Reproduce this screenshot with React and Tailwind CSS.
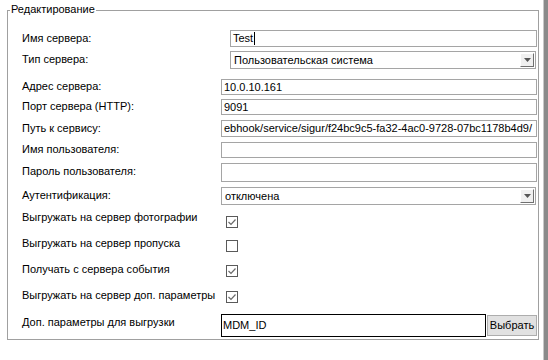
const FONT = { fontFamily: '"Liberation Sans", Arial, sans-serif' };

function Label({ children, w, pt }) {
  return (
    <div className={`shrink-0 pl-[14px] text-[11px] leading-[13px] text-black whitespace-nowrap ${w} ${pt}`}>
      {children}
    </div>
  );
}

function TextBox({ value, w, h, caret, mono }) {
  return (
    <div
      className={`shrink-0 flex items-center overflow-hidden border border-[#a5a5a5] bg-white pl-[2px] text-[11px] leading-[13px] text-black whitespace-nowrap ${w} ${h}`}
    >
      <span>{value}</span>
      {caret && <span className="ml-[1px] inline-block h-[13px] w-[1px] bg-black" />}
    </div>
  );
}

function Combo({ value, w }) {
  return (
    <div className={`shrink-0 flex h-[18px] items-stretch border border-[#a5a5a5] bg-white ${w}`}>
      <div className="flex flex-1 items-center overflow-hidden pl-[3px] text-[11px] leading-[13px] whitespace-nowrap">
        {value}
      </div>
      <div className="my-[1px] mr-[1px] flex w-[14px] items-center justify-center border-t border-l border-white border-r border-b border-r-[#707070] border-b-[#707070] bg-[#f0f0f0]">
        <svg width="7" height="4" viewBox="0 0 7 4">
          <path d="M0 0h7L3.5 4z" fill="#555" />
        </svg>
      </div>
    </div>
  );
}

function Check({ checked, mt }) {
  return (
    <div className={`shrink-0 ml-[0px] flex h-[12px] w-[12px] items-center justify-center border border-[#5a5a5a] bg-white ${mt}`}>
      {checked && (
        <svg width="10" height="10" viewBox="0 0 10 10">
          <path d="M1.5 5l2.5 2.5 4.5-5" fill="none" stroke="#6a6a6a" strokeWidth="1.2" />
        </svg>
      )}
    </div>
  );
}

export default function App() {
  return (
    <div className="flex h-[360px] w-[548px] bg-white text-black" style={FONT}>
      <div className="flex-1">
        <div className="relative ml-[7px] mt-[10px] h-[330px] w-[532px] border border-[#a0a0a0]">
          <div className="absolute left-[2px] top-[-8px] bg-white px-[1px] text-[11px] leading-[13px]">
            Редактирование
          </div>

          <div className="flex flex-col">
            <div className="mt-[19px] flex h-[17px] items-start">
              <Label w="w-[222px]" pt="pt-[2px]">Имя сервера:</Label>
              <TextBox value="Test" w="w-[307px]" h="h-[17px]" caret />
            </div>
            <div className="mt-[4px] flex h-[18px] items-start">
              <Label w="w-[222px]" pt="pt-[2px]">Тип сервера:</Label>
              <Combo value="Пользовательская система" w="w-[306px]" />
            </div>
            <div className="mt-[10px] flex h-[16px] items-start">
              <Label w="w-[213px]" pt="pt-[1px]">Адрес сервера:</Label>
              <TextBox value="10.0.10.161" w="w-[316px]" h="h-[16px]" />
            </div>
            <div className="mt-[4px] flex h-[16px] items-start">
              <Label w="w-[213px]" pt="pt-[1px]">Порт сервера (HTTP):</Label>
              <TextBox value="9091" w="w-[316px]" h="h-[16px]" />
            </div>
            <div className="mt-[5px] flex h-[17px] items-start">
              <Label w="w-[213px]" pt="pt-[2px]">Путь к сервису:</Label>
              <TextBox value="ebhook/service/sigur/f24bc9c5-fa32-4ac0-9728-07bc1178b4d9/" w="w-[316px]" h="h-[17px]" />
            </div>
            <div className="mt-[5px] flex h-[16px] items-start">
              <Label w="w-[213px]" pt="pt-[1px]">Имя пользователя:</Label>
              <TextBox value="" w="w-[316px]" h="h-[16px]" />
            </div>
            <div className="mt-[5px] flex h-[19px] items-start">
              <Label w="w-[213px]" pt="pt-[2px]">Пароль пользователя:</Label>
              <TextBox value="" w="w-[316px]" h="h-[19px]" />
            </div>
            <div className="mt-[5px] flex h-[18px] items-start">
              <Label w="w-[213px]" pt="pt-[2px]">Аутентификация:</Label>
              <Combo value="отключена" w="w-[315px]" />
            </div>
            <div className="mt-[6px] flex h-[17px] items-start">
              <Label w="w-[218px]" pt="pt-0">Выгружать на сервер фотографии</Label>
              <Check checked mt="mt-[5px]" />
            </div>
            <div className="mt-[9px] flex h-[17px] items-start">
              <Label w="w-[218px]" pt="pt-0">Выгружать на сервер пропуска</Label>
              <Check mt="mt-[3px]" />
            </div>
            <div className="mt-[9px] flex h-[17px] items-start">
              <Label w="w-[218px]" pt="pt-0">Получать с сервера события</Label>
              <Check checked mt="mt-[2px]" />
            </div>
            <div className="mt-[9px] flex h-[17px] items-start">
              <Label w="w-[218px]" pt="pt-0">Выгружать на сервер доп. параметры</Label>
              <Check checked mt="mt-[2px]" />
            </div>
            <div className="mt-[8px] flex h-[23px] items-start">
              <Label w="w-[213px]" pt="pt-[2px]">Доп. параметры для выгрузки</Label>
              <div className="flex h-[23px] w-[265px] shrink-0 items-center border border-black bg-white pl-[1px] text-[11px] leading-[13px]">
                MDM_ID
              </div>
              <button
                type="button"
                className="ml-[1px] mt-[1px] flex h-[21px] w-[50px] shrink-0 items-center justify-center border border-[#adadad] bg-[#e1e1e1] text-[11px] leading-[13px] text-black"
              >
                Выбрать
              </button>
            </div>
          </div>
        </div>
      </div>
      <div className="h-full w-[5px] shrink-0 border-l border-[#c8c8c8] bg-[#8a8a8a]" />
    </div>
  );
}
